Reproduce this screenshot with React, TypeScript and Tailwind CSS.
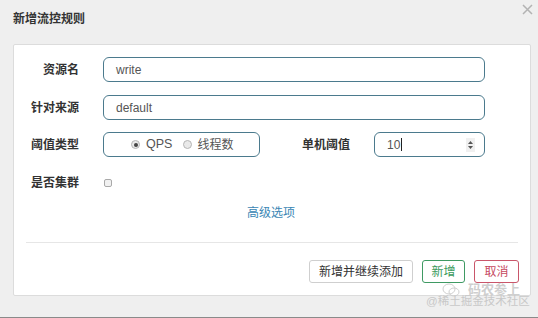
import React from "react";

const font = { fontFamily: '"Liberation Sans", "Noto Sans CJK SC", sans-serif' };

function Radio({ checked }: { checked?: boolean }) {
  return (
    <span className="inline-flex h-[9px] w-[9px] items-center justify-center rounded-full border border-[#b5b5b5] bg-[#e9e9e9]">
      {checked && <span className="h-[4px] w-[4px] rounded-full bg-[#444]" />}
    </span>
  );
}

export default function App() {
  return (
    <div
      style={font}
      className="relative flex h-[318px] w-[538px] flex-col overflow-hidden border-b border-[#8a8a8a] bg-[#efefef] text-[12px] text-[#333]"
    >
      {/* title */}
      <div className="flex h-[44px] items-start pl-[13px] pt-[11px]">
        <span className="text-[12px] font-bold leading-[16px] text-[#333]">新增流控规则</span>
      </div>
      {/* close */}
      <svg className="absolute left-[522px] top-[4px]" width="11" height="11" viewBox="0 0 11 11">
        <path d="M1 1L10 10M10 1L1 10" stroke="#b3b3b3" strokeWidth="1.5" />
      </svg>

      {/* card */}
      <div className="ml-[13px] mr-[7px] flex h-[252px] flex-col rounded-[2px] border border-[#dcdcdc] bg-white pt-[12px]">
        {/* row 1 */}
        <div className="flex h-[25px] items-center">
          <div className="w-[65px] text-right font-bold text-[#333]">资源名</div>
          <div className="ml-[24px] flex h-[25px] w-[382px] items-center rounded-[6px] border border-[#4b7a8d] px-[12px] text-[#555]">
            write
          </div>
        </div>
        {/* row 2 */}
        <div className="mt-[13px] flex h-[25px] items-center">
          <div className="w-[65px] text-right font-bold text-[#333]">针对来源</div>
          <div className="ml-[24px] flex h-[25px] w-[382px] items-center rounded-[6px] border border-[#4b7a8d] px-[12px] text-[#555]">
            default
          </div>
        </div>
        {/* row 3 */}
        <div className="mt-[12px] flex h-[25px] items-center">
          <div className="w-[65px] text-right font-bold text-[#333]">阈值类型</div>
          <div className="ml-[24px] flex h-[25px] w-[157px] items-center rounded-[6px] border border-[#4b7a8d] pl-[27px] text-[#555]">
            <Radio checked />
            <span className="ml-[6px] text-[12.5px]">QPS</span>
            <span className="ml-[11px]">
              <Radio />
            </span>
            <span className="ml-[5px]">线程数</span>
          </div>
          <div className="w-[90px] text-right font-bold text-[#333]">单机阈值</div>
          <div className="ml-[24px] flex h-[25px] w-[111px] items-center rounded-[6px] border border-[#4b7a8d] pl-[12px] pr-[9px] text-[#555]">
            <span>10</span>
            <span className="ml-[1px] h-[13px] w-px bg-[#222]" />
            <span className="ml-auto flex h-[14px] w-[9px] items-center justify-center bg-[#f0f0f0]">
              <svg width="7" height="10" viewBox="0 0 7 10">
                <path d="M3.5 1L6 4H1Z" fill="#555" />
                <path d="M3.5 9L6 6H1Z" fill="#555" />
              </svg>
            </span>
          </div>
        </div>
        {/* row 4 */}
        <div className="mt-[13px] flex h-[25px] items-center">
          <div className="w-[65px] text-right font-bold text-[#333]">是否集群</div>
          <div className="ml-[25px] h-[8px] w-[8px] rounded-[2px] border border-[#a9a9a9] bg-[#f1f1f1]" />
        </div>
        {/* advanced */}
        <div className="mt-[8px] flex h-[20px] items-center pl-[233px]">
          <span className="text-[#3a86b4]">高级选项</span>
        </div>
        {/* divider */}
        <div className="mx-[12px] mt-[19px] h-px bg-[#e6e6e6]" />
        {/* buttons */}
        <div className="mt-[17px] flex items-center justify-end gap-[9px] pr-[11px]">
          <button className="flex h-[23px] w-[104px] items-center justify-center rounded-[3px] border border-[#cfcfcf] bg-white text-[12px] text-[#333]">
            新增并继续添加
          </button>
          <button className="flex h-[23px] w-[43px] items-center justify-center rounded-[3px] border border-[#3f9a63] bg-white text-[12px] text-[#3a9a5c]">
            新增
          </button>
          <button className="flex h-[23px] w-[45px] items-center justify-center rounded-[3px] border border-[#c9566a] bg-white text-[12px] text-[#c64860]">
            取消
          </button>
        </div>
      </div>

      {/* watermark */}
      <div className="pointer-events-none absolute left-[442px] top-[280px] flex items-center gap-[8px] whitespace-nowrap text-[13px] text-[#d0d0d0]">
        <svg width="18" height="14" viewBox="0 0 18 14">
          <ellipse cx="7" cy="6" rx="6" ry="5" fill="none" stroke="#cfcfcf" strokeWidth="1" />
          <ellipse cx="12" cy="9" rx="5" ry="4" fill="none" stroke="#cfcfcf" strokeWidth="1" />
        </svg>
        <span className="font-bold text-[#cfcfcf]">码农参上</span>
      </div>
      <div className="pointer-events-none absolute left-[426px] top-[294px] whitespace-nowrap text-[11.5px] leading-[14px] text-[#c8c8c8]">
        @稀土掘金技术社区
      </div>
    </div>
  );
}
